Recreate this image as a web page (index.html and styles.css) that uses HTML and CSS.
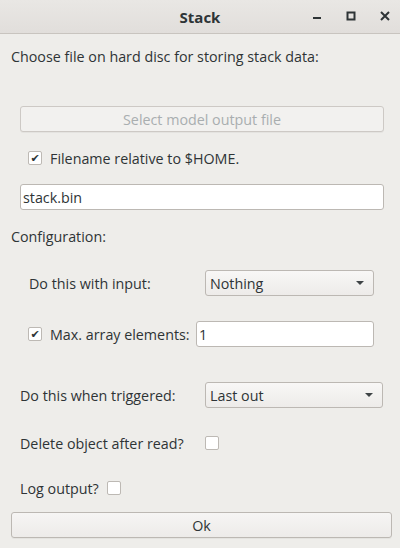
FILE: index.html
```html
<!DOCTYPE html>
<html>
<head>
<meta charset="utf-8">
<link rel="stylesheet" href="styles.css">
</head>
<body>
<div class="window">
  <div class="titlebar">
    <div class="title">Stack</div>
    <div class="wm-buttons">
      <svg class="wm" width="10" height="10" viewBox="0 0 10 10"><rect x="1" y="6" width="8" height="2" fill="#2e3436"/></svg>
      <svg class="wm" width="10" height="10" viewBox="0 0 10 10"><rect x="1.5" y="1.5" width="7" height="7" fill="none" stroke="#2e3436" stroke-width="2"/></svg>
      <svg class="wm" width="10" height="10" viewBox="0 0 10 10"><path d="M1 1 L9 9 M9 1 L1 9" stroke="#2e3436" stroke-width="2"/></svg>
    </div>
  </div>
  <div class="content">
    <div class="line intro">Choose file on hard disc for storing stack data:</div>
    <div class="group">
      <div class="button disabled select-btn">Select model output file</div>
      <div class="line check-row rel-row"><span class="checkbox checked">✔</span><span>Filename relative to $HOME.</span></div>
      <div class="entry file-entry">stack.bin</div>
    </div>
    <div class="line config">Configuration:</div>
    <div class="sub">
      <div class="form-row input-row">
        <span class="label">Do this with input:</span>
        <div class="combo combo-input"><span>Nothing</span><span class="arrow"></span></div>
      </div>
      <div class="form-row max-row">
        <span class="checkbox checked">✔</span>
        <span class="label max-label">Max. array elements:</span>
        <div class="entry max-entry">1</div>
      </div>
    </div>
    <div class="group">
      <div class="form-row trig-row">
        <span class="label trig-label">Do this when triggered:</span>
        <div class="combo combo-trig"><span>Last out</span><span class="arrow"></span></div>
      </div>
      <div class="line check-row del-row"><span class="del-label">Delete object after read?</span><span class="checkbox"></span></div>
      <div class="line check-row log-row"><span>Log output?</span><span class="checkbox"></span></div>
    </div>
    <div class="button ok-btn">Ok</div>
  </div>
</div>
</body>
</html>
```
FILE: styles.css
```css
* { box-sizing: border-box; }
html, body { margin: 0; padding: 0; }
body {
  width: 400px;
  height: 548px;
  background: #eeedea;
  font-family: "Open Sans", "Noto Sans", sans-serif;
  font-size: 14.3px;
  color: #2e3436;
  overflow: hidden;
}
.window { width: 400px; height: 548px; display: flex; flex-direction: column; }
.titlebar {
  height: 34px;
  flex: none;
  background: linear-gradient(#e9e7e4, #e1dedb);
  border-bottom: 1px solid #c8c4bf;
  position: relative;
  display: flex;
  align-items: center;
  justify-content: center;
}
.title { font-weight: bold; font-size: 15px; color: #2e3436; }
.wm-buttons {
  position: absolute;
  right: 10px;
  top: 11px;
  display: flex;
  gap: 24px;
}
.wm { display: block; }
.content { padding: 12px 8px 0 11px; display: flex; flex-direction: column; }
.line { height: 20px; display: flex; align-items: center; white-space: nowrap; }
.group { padding-left: 9px; display: flex; flex-direction: column; }
.select-btn { margin-top: 40px; width: 364px; }
.button {
  height: 26px;
  border: 1px solid #bcb8b3;
  border-radius: 3px;
  background: linear-gradient(#f6f5f4, #edebe9);
  display: flex;
  align-items: center;
  justify-content: center;
  box-shadow: 0 1px 0 rgba(0,0,0,0.04);
}
.button.disabled { color: #a9aeaf; background: #f2f1ef; border-color: #cdc9c5; }
.check-row { gap: 8px; }
.rel-row { margin-top: 16px; padding-left: 8px; }
.checkbox {
  width: 14px;
  height: 14px;
  flex: none;
  background: #fff;
  border: 1px solid #bdb9b4;
  border-radius: 2px;
  display: inline-flex;
  align-items: center;
  justify-content: center;
  font-size: 11px;
  font-weight: bold;
  line-height: 1;
  color: #2e3436;
  font-family: "DejaVu Sans", sans-serif;
}
.entry {
  height: 26px;
  background: #fff;
  border: 1px solid #bcb8b3;
  border-radius: 3px;
  display: flex;
  align-items: center;
  padding-left: 2px;
}
.file-entry { margin-top: 16px; width: 364px; }
.config { margin-top: 16px; }
.sub { padding-left: 17px; display: flex; flex-direction: column; }
.form-row { display: flex; align-items: center; height: 26px; }
.input-row { margin-top: 24px; }
.label { white-space: nowrap; flex: none; }
.input-row .label { width: 177px; padding-left: 1px; }
.combo {
  height: 26px;
  border: 1px solid #bcb8b3;
  border-radius: 3px;
  background: linear-gradient(#f8f7f6, #edebe9);
  display: flex;
  align-items: center;
  justify-content: space-between;
  padding: 0 9px 0 4px;
  flex: none;
}
.combo-input { width: 169px; }
.arrow {
  width: 0; height: 0;
  border-left: 4px solid transparent;
  border-right: 4px solid transparent;
  border-top: 4px solid #3f4446;
}
.max-row { margin-top: 25px; }
.max-label { margin-left: 8px; width: 146px; }
.max-entry { width: 178px; flex: none; }
.trig-row { margin-top: 35px; }
.trig-label { width: 185px; }
.combo-trig { width: 178px; }
.del-row { margin-top: 25px; gap: 0; }
.del-label { width: 185px; }
.log-row { margin-top: 25px; gap: 8px; }
.ok-btn { margin-top: 14px; width: 381px; }
```
